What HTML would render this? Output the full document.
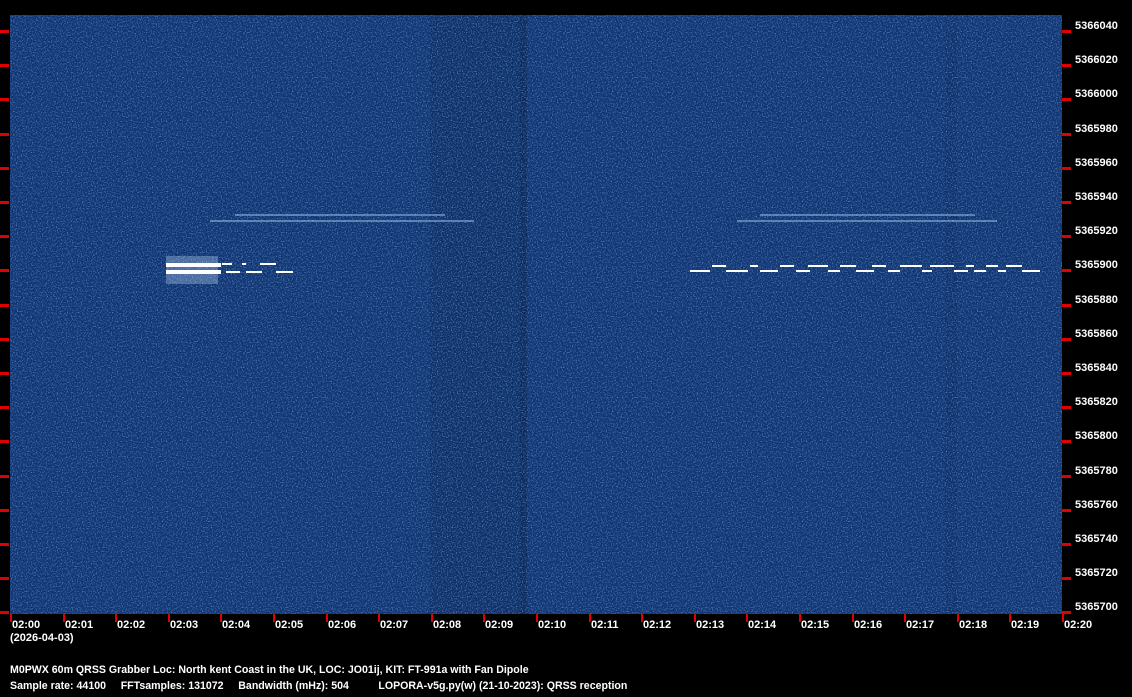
<!DOCTYPE html>
<html><head><meta charset="utf-8"><style>
html,body{margin:0;padding:0;background:#000;width:1132px;height:697px;overflow:hidden;position:relative;font-family:"Liberation Sans",Arial,sans-serif;font-weight:bold;font-size:11px;color:#fff}
.t{position:absolute;white-space:pre;line-height:12px}
.b{font-size:10.6px}
</style></head><body>
<svg width="1132" height="697" style="position:absolute;left:0;top:0">
<defs>
<filter id="n" x="0" y="0" width="100%" height="100%">
<feTurbulence type="fractalNoise" baseFrequency="0.8" numOctaves="1" seed="3"/>
<feColorMatrix type="matrix" values="0 0 0 0 0.3  0 0 0 0 0.5  0 0 0 0 0.9  0 0 0 2.2 -1.05"/>
</filter>
</defs>
<rect x="10" y="15" width="1052" height="599" fill="#0f3572"/>
<rect x="430" y="15" width="95" height="599" fill="#0b2c60" opacity="0.5"/>
<rect x="520" y="15" width="7" height="599" fill="#082450" opacity="0.5"/>
<rect x="945" y="15" width="12" height="599" fill="#0c2e64" opacity="0.4"/>
<rect x="10" y="15" width="1052" height="599" filter="url(#n)" opacity="0.8"/>
<g fill="#9fc4ee" opacity="0.5">
<rect x="210" y="220" width="264" height="2"/><rect x="235" y="214" width="210" height="2"/>
<rect x="737" y="220" width="260" height="2"/><rect x="760" y="214" width="215" height="2"/>
</g>
<g fill="#cfe3ff" opacity="0.3"><rect x="166" y="256" width="52" height="28"/></g>
<g fill="#fff">
<rect x="166" y="263" width="55" height="4"/><rect x="166" y="270" width="55" height="4"/>
<rect x="222" y="263" width="10" height="2"/><rect x="226" y="271" width="14" height="2"/>
<rect x="242" y="263" width="4" height="2"/><rect x="246" y="271" width="16" height="2"/>
<rect x="260" y="263" width="16" height="2"/><rect x="276" y="271" width="17" height="2"/>
<rect x="690" y="270" width="20" height="2"/><rect x="712" y="265" width="14" height="2"/>
<rect x="726" y="270" width="22" height="2"/><rect x="750" y="265" width="8" height="2"/>
<rect x="760" y="270" width="18" height="2"/><rect x="780" y="265" width="14" height="2"/>
<rect x="796" y="270" width="14" height="2"/><rect x="808" y="265" width="20" height="2"/>
<rect x="828" y="270" width="12" height="2"/><rect x="840" y="265" width="16" height="2"/>
<rect x="856" y="270" width="18" height="2"/><rect x="872" y="265" width="14" height="2"/>
<rect x="888" y="270" width="12" height="2"/><rect x="900" y="265" width="22" height="2"/>
<rect x="922" y="270" width="10" height="2"/><rect x="930" y="265" width="24" height="2"/>
<rect x="954" y="270" width="14" height="2"/><rect x="966" y="265" width="8" height="2"/>
<rect x="974" y="270" width="12" height="2"/><rect x="986" y="265" width="12" height="2"/>
<rect x="998" y="270" width="8" height="2"/><rect x="1006" y="265" width="16" height="2"/>
<rect x="1022" y="270" width="18" height="2"/>
</g>
<g fill="#e00000" id="ticks"></g>
</svg>
<div id="labels"></div>
<div class="t" style="left:10px;top:632px">(2026-04-03)</div>
<div class="t b" style="left:10px;top:664px">M0PWX 60m QRSS Grabber Loc: North kent Coast in the UK, LOC: JO01ij, KIT: FT-991a with Fan Dipole</div>
<div class="t b" style="left:10px;top:680px">Sample rate: 44100     FFTsamples: 131072     Bandwidth (mHz): 504          LOPORA-v5g.py(w) (21-10-2023): QRSS reception</div>
<script>
var g=document.getElementById('ticks'),L=document.getElementById('labels'),s='';
for(var i=0;i<18;i++){var y=Math.round(31+34.2*i);
g.innerHTML+='<rect x="0" y="'+(y-1)+'" width="9" height="3"/><rect x="1062" y="'+(y-1)+'" width="9" height="3"/>';
s+='<div class="t" style="left:1075px;top:'+(y-11)+'px">'+(5366040-20*i)+'</div>';}
for(var j=0;j<21;j++){var x=Math.round(10+52.6*j);
g.innerHTML+='<rect x="'+x+'" y="614" width="2" height="8"/>';
s+='<div class="t" style="left:'+(x+2)+'px;top:619px">02:'+(j<10?'0':'')+j+'</div>';}
L.innerHTML=s;
</script>
</body></html>
